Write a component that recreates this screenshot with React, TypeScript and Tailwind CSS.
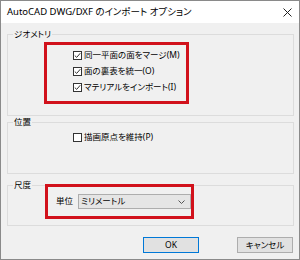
import React from "react";

const font = {
  fontFamily: '"Noto Sans", "Noto Sans CJK JP", sans-serif',
};

function Check({ checked }: { checked?: boolean }) {
  return (
    <span className="flex h-[9px] w-[9px] shrink-0 items-center justify-center border border-[#333333] bg-white">
      {checked && (
        <svg width="7" height="7" viewBox="0 0 7 7">
          <path d="M0.8 3.6 L2.7 5.4 L6.3 1.2" stroke="#333" strokeWidth="1" fill="none" />
        </svg>
      )}
    </span>
  );
}

function Row({ label, checked }: { label: React.ReactNode; checked?: boolean }) {
  return (
    <div className="flex h-[16px] items-center gap-[2px]">
      <Check checked={checked} />
      <span>{label}</span>
    </div>
  );
}

function Legend({ children }: { children: React.ReactNode }) {
  return (
    <div className="-mt-[7px] ml-[5px] w-fit bg-[#f0f0f0] px-[1px] leading-[12px]">
      {children}
    </div>
  );
}

export default function App() {
  return (
    <div
      className="flex h-[260px] w-[300px] flex-col border border-[#8a8a8a] bg-[#f0f0f0] text-[8.5px] text-black [font-feature-settings:'palt']"
      style={font}
    >
      {/* title bar */}
      <div className="flex h-[22px] items-center justify-between bg-white pl-[6px] pr-[7px]">
        <span className="text-[9.5px]">AutoCAD DWG/DXF のインポート オプション</span>
        <svg width="9" height="9" viewBox="0 0 9 9">
          <path d="M0.5 0.5 L8.5 8.5 M8.5 0.5 L0.5 8.5" stroke="#222" strokeWidth="1" />
        </svg>
      </div>

      <div className="flex flex-1 flex-col pl-[6px] pr-[5px] pt-[11px]">
        {/* ジオメトリ */}
        <div className="h-[82px] border border-[#dcdcdc]">
          <Legend>ジオメトリ</Legend>
          <div className="ml-[36px] mt-[2px] h-[62px] w-[145px] border-[3px] border-[#d1111b] pl-[26px] pt-[2px]">
            <Row checked label="同一平面の面をマージ(M)" />
            <Row checked label="面の裏表を統一(O)" />
            <Row checked label="マテリアルをインポート(I)" />
          </div>
        </div>

        {/* 位置 */}
        <div className="mt-[6px] h-[52px] border border-[#dcdcdc]">
          <Legend>位置</Legend>
          <div className="mt-[1px] pl-[65px]">
            <Row label="描画原点を維持(P)" />
          </div>
        </div>

        {/* 尺度 */}
        <div className="mt-[11px] h-[41px] border border-[#dcdcdc]">
          <Legend>尺度</Legend>
          <div className="-mt-[7px] ml-[37px] flex h-[35px] w-[149px] items-center gap-[5px] border-[3px] border-[#d1111b] pl-[8px]">
            <span>単位</span>
            <div className="flex h-[15px] w-[113px] items-center justify-between border border-[#adadad] bg-[#e5e5e5] pl-[2px] pr-[5px]">
              <span>ミリメートル</span>
              <svg width="7" height="4" viewBox="0 0 7 4">
                <path d="M0.5 0.5 L3.5 3.5 L6.5 0.5" stroke="#555" strokeWidth="1" fill="none" />
              </svg>
            </div>
          </div>
        </div>

        {/* buttons */}
        <div className="mt-[11px] flex justify-end gap-[38px] pr-[1px]">
          <button className="flex h-[16px] w-[56px] items-center justify-center border border-[#0078d7] bg-[#e1e1e1]">
            OK
          </button>
          <button className="flex h-[16px] w-[56px] items-center justify-center border border-[#adadad] bg-[#e1e1e1]">
            キャンセル
          </button>
        </div>
      </div>
    </div>
  );
}
